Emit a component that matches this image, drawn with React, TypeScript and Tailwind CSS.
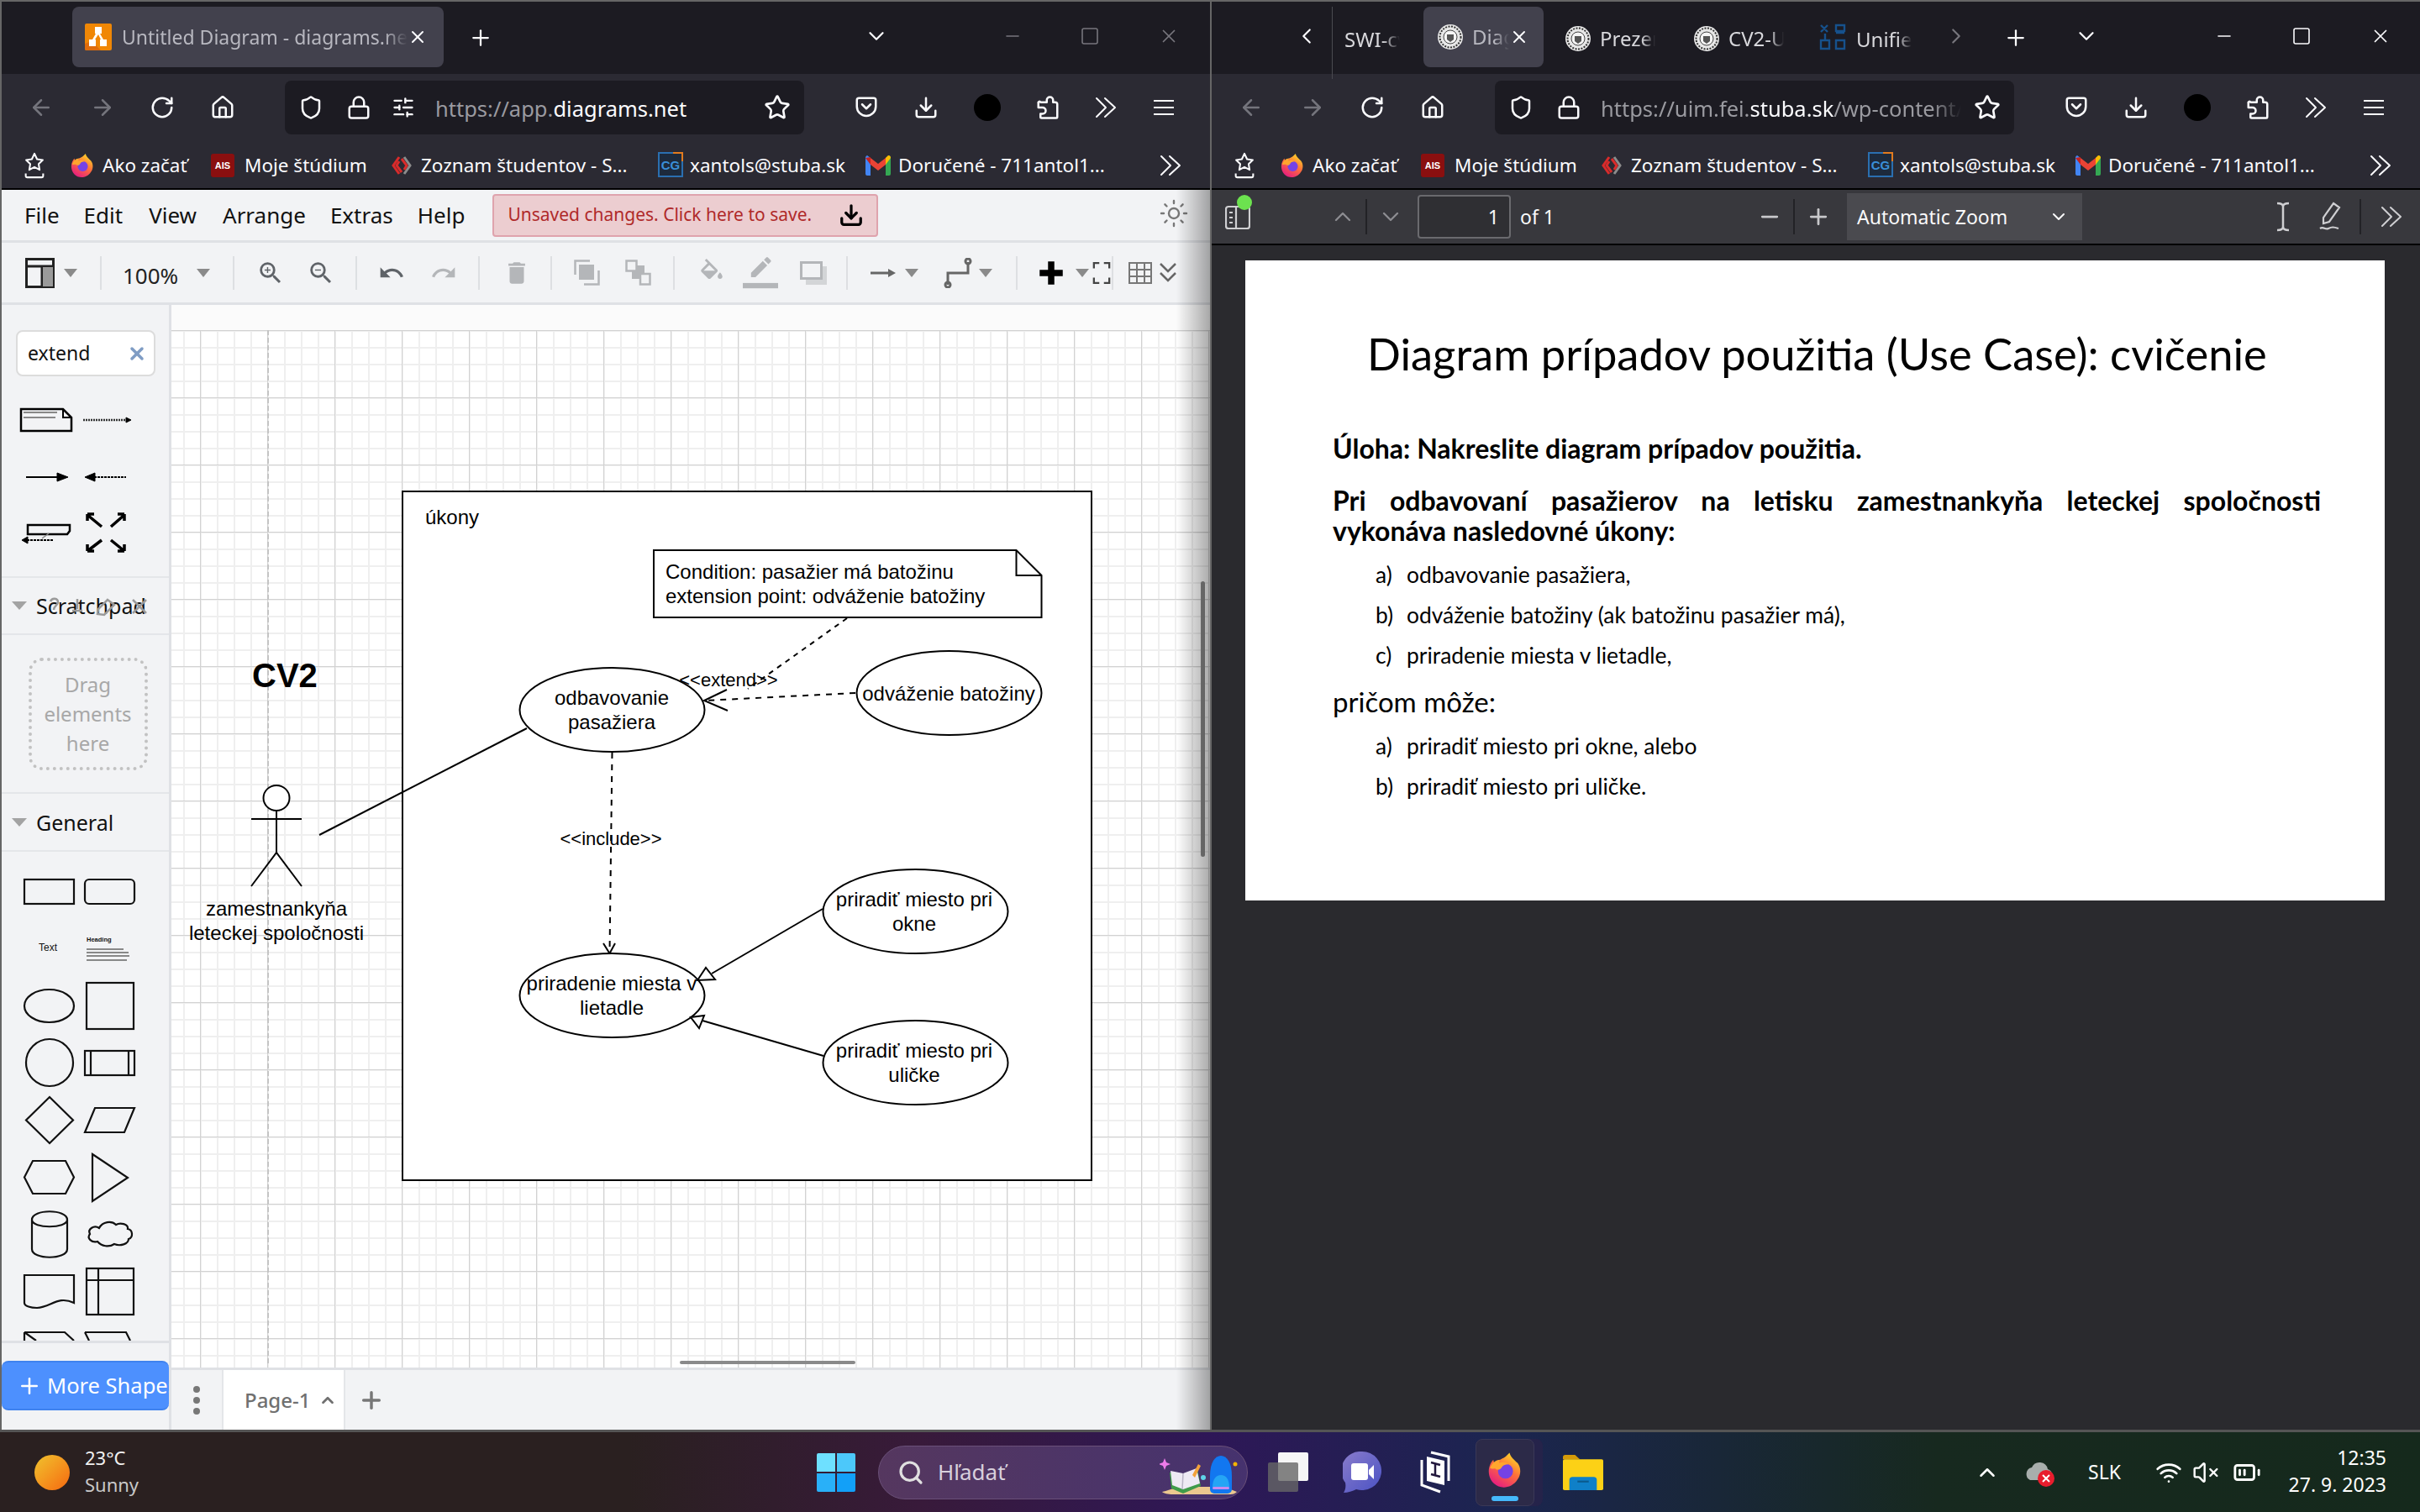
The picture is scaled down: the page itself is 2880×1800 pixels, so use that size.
import React from "react";
import { ArrowLeft, ArrowRight, RotateCw, House, Shield, Lock, SlidersHorizontal, Star, Download, Plus, X, ChevronDown, ChevronUp, ChevronLeft, ChevronRight, Minus, Square, Search, Wifi, VolumeX, BatteryMedium, Sun } from "lucide-react";

const SANS = "font-['Noto_Sans',sans-serif]";

function Firefox({ cls, id }: { cls: string; id: string }) {
  return (
    <svg viewBox="0 0 32 32" className={cls}>
      <defs>
        <linearGradient id={id} x1="0.8" y1="0" x2="0.2" y2="1">
          <stop offset="0" stopColor="#ffe226" />
          <stop offset="0.45" stopColor="#ff7139" />
          <stop offset="1" stopColor="#e31587" />
        </linearGradient>
      </defs>
      <path d="M20 1c1 4 4 6 7 9 3 4 3 10 0 14-3 5-8 7-12 7C8 31 2 25 2 17 2 13 4 9 6 7c0 2 1 3 2 4 2-4 7-5 9-7 1-1 2-2 3-3z" fill={`url(#${id})`} />
      <circle cx="16.5" cy="17" r="6.5" fill="#7542e5" />
      <path d="M3 14c2-4 5-7 9-7-1 1-1 2-1 3 2-1 6-1 8 1-3 0-5 1-6 3-1 2-4 2-5 1-1-1-3 1-5-1z" fill="#ffa62e" />
    </svg>
  );
}

function Crest({ cls }: { cls: string }) {
  return (
    <svg viewBox="0 0 32 32" className={cls}>
      <circle cx="16" cy="16" r="15" fill="#e8e8e8" />
      <circle cx="16" cy="16" r="12.5" fill="none" stroke="#333" strokeWidth="2" strokeDasharray="2 1.5" />
      <circle cx="16" cy="16" r="8" fill="#f5f5f5" stroke="#444" strokeWidth="1" />
      <path d="M12 13h8v6l-4 3-4-3z" fill="#555" />
    </svg>
  );
}

const Dbl = ({ cls }: { cls: string }) => (
  <svg viewBox="0 0 26 26" className={cls} fill="none" stroke="currentColor" strokeWidth="2" strokeLinecap="round" strokeLinejoin="round">
    <path d="M2 2l11 11L2 24M12 2l12 11-12 11" />
  </svg>
);

function Bookmarks() {
  return (
    <div className={`flex h-[56px] shrink-0 items-center border-b-2 border-black text-[22.5px] text-[#fbfbfe] ${SANS}`}>
      <svg viewBox="0 0 28 34" className="ml-[25px] h-[32px] w-[28px] shrink-0" fill="none" stroke="#fbfbfe" strokeWidth="2.2" strokeLinejoin="round">
        <path d="M14 2l3.300 7 7.200 1-5.200 5.200 1.200 7.300L14 19l-6.500 3.500 1.200-7.300L3.500 10l7.200-1z" />
        <path d="M3 27v3a2 2 0 0 0 2 2h18a2 2 0 0 0 2-2v-3" />
      </svg>
      <Firefox id="ffbm" cls="ml-[28px] h-[30px] w-[30px] shrink-0" />
      <span className="ml-[9px] w-[116px] shrink-0 whitespace-nowrap">Ako začať</span>
      <svg viewBox="0 0 28 28" className="ml-[13px] h-[28px] w-[28px] shrink-0">
        <rect width="28" height="28" rx="3" fill="#8a0f0f" />
        <text x="14" y="18" textAnchor="middle" fontSize="11" fontWeight="700" fill="#fff" fontFamily="Liberation Sans">AIS</text>
      </svg>
      <span className="ml-[12px] w-[158px] shrink-0 whitespace-nowrap">Moje štúdium</span>
      <svg viewBox="0 0 26 26" className="ml-[16px] h-[26px] w-[26px] shrink-0" fill="none" strokeWidth="3">
        <path d="M10 3L3 13l7 10" stroke="#d92b2b" />
        <path d="M16 3l7 10-7 10" stroke="#8c8c8c" />
        <path d="M10 8l-3 5 6 8M16 18l3-5-6-8" stroke="#d92b2b" />
      </svg>
      <span className="ml-[10px] w-[272px] shrink-0 whitespace-nowrap">Zoznam študentov - S...</span>
      <svg viewBox="0 0 30 32" className="ml-[10px] h-[32px] w-[30px] shrink-0">
        <rect x="1" y="1" width="28" height="28" fill="#1d2a3c" stroke="#2a6fb0" strokeWidth="2" />
        <text x="15" y="21" textAnchor="middle" fontSize="15" fontWeight="700" fill="#3a8fd8" fontFamily="Liberation Sans">CG</text>
        <path d="M18 1h11v10" fill="none" stroke="#e27b1f" strokeWidth="2" />
      </svg>
      <span className="ml-[8px] w-[200px] shrink-0 whitespace-nowrap">xantols@stuba.sk</span>
      <svg viewBox="0 0 30 24" className="ml-[9px] h-[24px] w-[30px] shrink-0">
        <path d="M0 3a3 3 0 0 1 2-3l4 3v21H2a2 2 0 0 1-2-2z" fill="#4285f4" />
        <path d="M24 24V3l4-3a3 3 0 0 1 2 3v19a2 2 0 0 1-2 2z" fill="#34a853" />
        <path d="M6 3l9 7 9-7v8l-9 7-9-7z" fill="#ea4335" />
        <path d="M0 3l6-1v9z" fill="#c5221f" />
        <path d="M24 3l3-3c2 0 3 1 3 3l-6 8z" fill="#fbbc04" />
      </svg>
      <span className="ml-[9px] w-[270px] shrink-0 whitespace-nowrap">Doručené - 711antol1...</span>
      <Dbl cls="ml-[41px] h-[26px] w-[26px] text-[#fbfbfe]" />
    </div>
  );
}

function NavBar({ right }: { right: boolean }) {
  return (
    <div className="flex h-[82px] shrink-0 items-start pt-[8px]">
      <div className="flex h-[64px] items-center">
        <ArrowLeft className="ml-[32px] h-[30px] w-[30px] text-[#74747c]" strokeWidth={2} />
        <ArrowRight className="ml-[43px] h-[30px] w-[30px] text-[#74747c]" strokeWidth={2} />
        <RotateCw className="ml-[41px] h-[30px] w-[30px] text-[#fbfbfe]" strokeWidth={2} />
        <House className="ml-[42px] h-[30px] w-[30px] text-[#fbfbfe]" strokeWidth={2} />
      </div>
      <div className={`ml-[59px] flex h-[64px] w-[618px] shrink-0 items-center overflow-hidden rounded-lg bg-[#1c1b22] text-[25.5px] ${SANS}`}>
        <Shield className="ml-[16px] h-[30px] w-[30px] shrink-0 text-[#fbfbfe]" strokeWidth={2} />
        <Lock className="ml-[27px] h-[30px] w-[30px] shrink-0 text-[#fbfbfe]" strokeWidth={2} />
        {right ? (
          <span className="ml-[23px] w-[429px] shrink-0 overflow-hidden whitespace-nowrap pt-[2px] text-[#9a9aa0] [mask-image:linear-gradient(to_right,black_92%,transparent)]">
            https://uim.fei.<span className="text-[#fbfbfe]">stuba.sk</span>/wp-content/uploads
          </span>
        ) : (
          <>
            <SlidersHorizontal className="ml-[24px] h-[28px] w-[28px] shrink-0 text-[#fbfbfe]" strokeWidth={2} />
            <span className="ml-[24px] w-[376px] shrink-0 whitespace-nowrap pt-[2px] text-[#9a9aa0]">
              https://app.<span className="text-[#fbfbfe]">diagrams.net</span>
            </span>
          </>
        )}
        <Star className="ml-[15px] h-[32px] w-[32px] shrink-0 text-[#fbfbfe]" strokeWidth={2} />
      </div>
      <div className="flex h-[64px] items-center text-[#fbfbfe]">
        <svg viewBox="0 0 24 24" className="ml-[59px] h-[30px] w-[30px]" fill="none" stroke="currentColor" strokeWidth="2" strokeLinejoin="round" strokeLinecap="round">
          <path d="M3 5a2 2 0 0 1 2-2h14a2 2 0 0 1 2 2v6a9 9 0 0 1-18 0z" />
          <path d="M8 9l4 4 4-4" />
        </svg>
        <Download className="ml-[41px] h-[30px] w-[30px]" strokeWidth={2} />
        <span className="ml-[42px] h-[32px] w-[32px] rounded-full bg-black" />
        <svg viewBox="0 0 24 24" className="ml-[41px] h-[32px] w-[30px]" fill="none" stroke="currentColor" strokeWidth="2" strokeLinejoin="round">
          <path d="M5 7h6V5a3 3 0 0 1 6 0v2h2a2 2 0 0 1 2 2v12a1 1 0 0 1-1 1H6a1 1 0 0 1-1-1v-3h2a3 3 0 0 0 0-6H3V8a1 1 0 0 1 2-1z" />
        </svg>
        <Dbl cls="ml-[41px] h-[26px] w-[26px]" />
        <svg viewBox="0 0 24 20" className="ml-[44px] h-[20px] w-[24px]" stroke="currentColor" strokeWidth="2.2"><path d="M0 2h24M0 10h24M0 18h24" /></svg>
      </div>
    </div>
  );
}

function WinControls({ cls, color }: { cls: string; color: string }) {
  return (
    <div className={`flex items-center ${color} ${cls}`}>
      <Minus className="h-[24px] w-[24px]" strokeWidth={1.6} />
      <Square className="ml-[68px] h-[24px] w-[24px]" strokeWidth={1.6} />
      <X className="ml-[69px] h-[26px] w-[26px]" strokeWidth={1.6} />
    </div>
  );
}

function Ic({ d, cls }: { d: string; cls: string }) {
  return (
    <svg viewBox="0 0 24 24" className={cls} fill="currentColor">
      <path d={d} />
    </svg>
  );
}
const Caret = ({ cls }: { cls: string }) => (
  <svg viewBox="0 0 16 10" className={`h-[10px] w-[16px] ${cls}`}>
    <path d="M0 0h16l-8 10z" fill="#8a8a8a" />
  </svg>
);
const Sep = ({ cls }: { cls: string }) => <i className={`h-[40px] w-[2px] bg-[#dddfe2] ${cls}`} />;

const ZOOM = "M15.5 14h-.79l-.28-.27A6.471 6.471 0 0 0 16 9.5 6.5 6.5 0 1 0 9.5 16c1.61 0 3.09-.59 4.23-1.57l.27.28v.79l5 4.99L20.49 19l-4.99-5zm-6 0C7.01 14 5 11.99 5 9.5S7.01 5 9.5 5 14 7.01 14 9.500 11.99 14 9.500 14z";

function Toolbar() {
  const off = "text-[#b4b6b9]";
  const on = "text-[#5f6368]";
  return (
    <div className="flex h-[74px] shrink-0 items-center border-b-[3px] border-[#dfe1e5] bg-[#f2f3f5]">
      <svg viewBox="0 0 35 36" className="ml-[28px] h-[36px] w-[35px]">
        <rect x="1.5" y="1.5" width="32" height="33" fill="none" stroke="#222" strokeWidth="3" />
        <path d="M1.5 10h32M20 10v25" stroke="#222" strokeWidth="3" />
        <rect x="21" y="11" width="12" height="23" fill="#9a9a9a" />
      </svg>
      <Caret cls="ml-[11px]" />
      <Sep cls="ml-[27px]" />
      <span className={`ml-[25px] mt-[8px] w-[66px] text-[26px] text-[#222] ${SANS}`}>100%</span>
      <Caret cls="ml-[22px]" />
      <Sep cls="ml-[27px]" />
      <svg viewBox="0 0 24 24" className={`ml-[26px] h-[34px] w-[34px] ${on}`} fill="currentColor"><path d={ZOOM} /><path d="M12 10h-2v2H9v-2H7V9h2V7h1v2h2v1z" /></svg>
      <svg viewBox="0 0 24 24" className={`ml-[26px] h-[34px] w-[34px] ${on}`} fill="currentColor"><path d={ZOOM} /><path d="M7 9h5v1H7z" /></svg>
      <Sep cls="ml-[24px]" />
      <Ic cls={`ml-[25px] h-[32px] w-[32px] ${on}`} d="M12.5 8c-2.65 0-5.05.99-6.9 2.6L2 7v9h9l-3.62-3.62c1.39-1.16 3.16-1.88 5.12-1.88 3.54 0 6.55 2.31 7.6 5.5l2.37-.78C21.08 11.03 17.15 8 12.5 8z" />
      <Ic cls={`ml-[30px] h-[32px] w-[32px] ${off}`} d="M18.4 10.6C16.55 8.99 14.15 8 11.5 8c-4.65 0-8.58 3.03-9.96 7.22L3.9 16c1.05-3.19 4.05-5.5 7.6-5.5 1.95 0 3.73.72 5.12 1.88L13 16h9V7l-3.6 3.6z" />
      <Sep cls="ml-[25px]" />
      <Ic cls={`ml-[27px] h-[34px] w-[34px] ${off}`} d="M6 19c0 1.1.9 2 2 2h8c1.1 0 2-.9 2-2V7H6v12zM19 4h-3.5l-1-1h-5l-1 1H5v2h14V4z" />
      <Sep cls="ml-[23px]" />
      <svg viewBox="0 0 31 31" className="ml-[26px] h-[31px] w-[31px]" fill="none" stroke="#b4b6b9" strokeWidth="2.5">
        <path d="M1.5 18V1.500H19M29.500 13v16.500H12" />
        <rect x="6" y="6" width="18" height="18" fill="#b4b6b9" stroke="none" />
      </svg>
      <svg viewBox="0 0 31 31" className="ml-[30px] h-[31px] w-[31px]" stroke="#b4b6b9" strokeWidth="2.5">
        <rect x="8" y="7" width="15" height="16" fill="#b4b6b9" stroke="none" />
        <rect x="1.500" y="1.500" width="12" height="12" fill="#f2f3f5" />
        <rect x="18" y="17" width="11.500" height="12.500" fill="#f2f3f5" />
      </svg>
      <Sep cls="ml-[26px]" />
      <Ic cls={`ml-[27px] h-[34px] w-[34px] ${off}`} d="M16.56 8.94L7.62 0 6.21 1.41l2.38 2.38-5.15 5.15c-.59.59-.59 1.54 0 2.12l5.5 5.5c.29.29.68.44 1.06.44s.77-.15 1.06-.44l5.5-5.500c.59-.58.59-1.53 0-2.12zM5.21 10L10 5.21 14.79 10H5.21zM19 11.500s-2 2.170-2 3.500c0 1.100.9 2 2 2s2-.9 2-2c0-1.330-2-3.500-2-3.500z" />
      <svg viewBox="-3 0 30 27" className={`ml-[20px] h-[38px] w-[42px] ${off}`} fill="currentColor">
        <path d="M17.750 7L14 3.250l-10 10V17h3.750l10-10zm2.960-2.960c.39-.39.39-1.020 0-1.410L18.370.29a.9959.9959 0 0 0-1.410 0L15 2.250 18.750 6l1.960-1.960z" />
        <rect x="-3" y="22" width="30" height="4.500" />
      </svg>
      <svg viewBox="0 0 32 28" className="ml-[26px] h-[28px] w-[32px]" fill="none">
        <rect x="7" y="6" width="25" height="22" fill="#d3d5d7" />
        <rect x="1.500" y="1.500" width="24" height="19" fill="#f2f3f5" stroke="#b4b6b9" strokeWidth="3" />
      </svg>
      <Sep cls="ml-[23px]" />
      <svg viewBox="0 0 32 24" className="ml-[26px] h-[24px] w-[32px]"><path d="M1 12h24" stroke="#666" strokeWidth="3" /><path d="M22 7l9 5-9 5z" fill="#666" /></svg>
      <Caret cls="ml-[10px]" />
      <svg viewBox="0 0 34 36" className="ml-[30px] h-[36px] w-[34px]" fill="none" stroke="#666" strokeWidth="3"><path d="M5 32V18h24V5" /><circle cx="5" cy="32" r="3" /><circle cx="29" cy="4" r="3" /></svg>
      <Caret cls="ml-[8px]" />
      <Sep cls="ml-[28px]" />
      <Ic cls="ml-[25px] h-[30px] w-[30px] text-black" d="M9 1h6v8h8v6h-8v8H9v-8H1V9h8z" />
      <Caret cls="ml-[14px]" />
      <svg viewBox="0 0 24 30" className="ml-[4px] h-[30px] w-[22px]" fill="none" stroke="#444" strokeWidth="2.5"><path d="M2 9V2h7M15 2h7v7M22 21v7h-7M9 28H2v-7" /></svg>
      <Sep cls="ml-[1px]" />
      <svg viewBox="0 0 30 30" className="ml-[17px] h-[30px] w-[30px]" fill="none" stroke="#777" strokeWidth="2"><rect x="2" y="3" width="26" height="24" /><path d="M2 11h26M2 19h26M11 3v24M20 3v24" /></svg>
      <svg viewBox="0 0 24 30" className="ml-[6px] h-[30px] w-[24px]" fill="none" stroke="#666" strokeWidth="2.5"><path d="M3 4l9 9 9-9M3 15l9 9 9-9" /></svg>
    </div>
  );
}

function SearchShapes() {
  return (
    <svg viewBox="2 448 198 238" className="h-[238px] w-[198px] shrink-0" stroke="#000" fill="none">
      <path d="M25 487h50l10 10v16H25z" strokeWidth="2.5" />
      <path d="M75 487v10h10" strokeWidth="2" />
      <path d="M28 491h40M28 497h38" stroke="#888" strokeWidth="2" />
      <path d="M99 500h52" stroke="#333" strokeWidth="2.5" strokeDasharray="2 1" />
      <path d="M150 497l6 3-6 3z" fill="#000" />
      <path d="M31 568h38" strokeWidth="2" />
      <path d="M68 563l13 5-13 5z" fill="#000" />
      <path d="M112 568h38" strokeWidth="2" strokeDasharray="3 1" />
      <path d="M113 563l-12 5 12 5z" fill="#000" />
      <path d="M33 625h50v7l-3 4H33z" strokeWidth="2.5" />
      <path d="M28 643h36" strokeWidth="2" strokeDasharray="3 1" />
      <path d="M33 639l-7 4 7 4z" fill="#000" />
      <path d="M50 641l8-6" stroke="#888" strokeWidth="1.5" />
      <g strokeWidth="3.5">
        <path d="M104 613l17 14M104 612h8M104 612v8" />
        <path d="M148 613l-16 14M148 612h-8M148 612v8" />
        <path d="M104 656l17-13M104 656h8M104 656v-8" />
        <path d="M148 656l-16-13M148 656h-8M148 656v-8" />
      </g>
    </svg>
  );
}

function GeneralShapes() {
  return (
    <svg viewBox="2 1014 198 582" className="h-[582px] w-[198px] shrink-0" stroke="#111" strokeWidth="2.2" fill="none">
      <rect x="29" y="1047" width="59" height="29" />
      <rect x="101" y="1047" width="59" height="29" rx="5" />
      <text x="57" y="1132" textAnchor="middle" fontSize="12" stroke="none" fill="#111" fontFamily="Liberation Sans">Text</text>
      <text x="103" y="1121" fontSize="7.5" fontWeight="700" stroke="none" fill="#111" fontFamily="Liberation Sans">Heading</text>
      <path d="M103 1130h44M103 1134h50M103 1138h51M103 1143h48" stroke="#888" strokeWidth="2" />
      <ellipse cx="58.5" cy="1197.5" rx="29.5" ry="19.5" />
      <rect x="103" y="1170" width="56" height="55" />
      <circle cx="59" cy="1265" r="28" />
      <rect x="101" y="1251" width="59" height="29" />
      <path d="M108 1251v29M153 1251v29" />
      <path d="M59 1306l28 27.500-28 27.500-28-27.500z" />
      <path d="M113 1319h47l-12 29h-47z" />
      <path d="M39 1382h39l10 19.500-10 19.500H39l-10-19.500z" />
      <path d="M110 1374l42 28-42 28z" />
      <path d="M38 1452c0-13 42-13 42 0v35c0 13-42 13-42 0zM38 1452c0 11 42 11 42 0" />
      <path d="M118 1462c-6-4-14 1-11 7-4 5 2 11 9 9 5 6 14 7 20 3 7 3 17 0 17-6 6-2 5-11-1-12 1-6-9-8-14-5-5-5-16-4-20 4z" />
      <path d="M29 1518h59v33c-19-9-27 5-44 6-7 0-15-2-15-6z" />
      <rect x="103" y="1510" width="56" height="55" />
      <path d="M103 1524h56M117 1510v55" />
      <path d="M29 1586h48l11 10M29 1586v10M29 1586l14 10" />
      <path d="M101 1586h49l5 10M101 1586l5 10" />
    </svg>
  );
}

function Sidebar() {
  return (
    <aside className={`flex h-full w-[202px] shrink-0 flex-col border-r-[3px] border-[#dfe1e5] bg-[#f2f3f5] ${SANS}`}>
      <div className="ml-[17px] mt-[30px] flex h-[55px] w-[166px] shrink-0 items-center rounded-lg border-2 border-[#dcdcdc] bg-white">
        <span className="ml-[12px] w-[118px] text-[23px] text-[#111]">extend</span>
        <X className="h-[24px] w-[24px] text-[#7f9cc4]" strokeWidth={3.5} />
      </div>
      <SearchShapes />
      <div className="relative flex h-[70px] shrink-0 items-center border-y-2 border-[#e4e6e9]">
        <svg viewBox="0 0 18 10" className="ml-[12px] h-[10px] w-[18px]"><path d="M0 0h18l-9 10z" fill="#a3a3a3" /></svg>
        <span className="ml-[11px] pt-[2px] text-[25px] text-[#111]">Scratchpad</span>
        <svg viewBox="0 0 120 24" className="absolute left-[52px] top-[22px] h-[24px] w-[124px]" fill="none" stroke="#9a9a9a" strokeWidth="2.5">
          <path d="M4 6c2-5 9-4 9 1 0 4-5 4-5 9" />
          <path d="M36 3v12M30 17h12" />
          <path d="M72 4l8 6-12 12-8-1 1-6z" />
          <path d="M102 4l16 16M118 4l-16 16" />
        </svg>
      </div>
      <div className="flex h-[187px] shrink-0 items-center justify-center">
        <div className="ml-[6px] flex h-[134px] w-[142px] flex-col items-center justify-center rounded-[16px] border-[4px] border-dotted border-[#c2c2c2] text-[24px] leading-[35px] text-[#a8a8a8]">
          <span>Drag</span>
          <span>elements</span>
          <span>here</span>
        </div>
      </div>
      <div className="flex h-[71px] shrink-0 items-center border-y-2 border-[#e4e6e9]">
        <svg viewBox="0 0 18 10" className="ml-[12px] h-[10px] w-[18px]"><path d="M0 0h18l-9 10z" fill="#a3a3a3" /></svg>
        <span className="ml-[11px] pt-[2px] text-[25px] text-[#111]">General</span>
      </div>
      <div className="h-[582px] shrink-0 overflow-hidden">
        <GeneralShapes />
      </div>
      <div className="flex-1 border-t-[3px] border-[#dfe1e5] pt-[21px]">
        <button className="flex h-[59px] w-[199px] items-center overflow-hidden rounded-lg border-y-2 border-[#3f82ee] bg-[#4d90fe] text-white">
          <Plus className="ml-[18px] h-[30px] w-[30px] shrink-0" strokeWidth={2} />
          <span className="ml-[6px] whitespace-nowrap text-[25.5px]">More Shapes</span>
        </button>
      </div>
    </aside>
  );
}

function Diagram() {
  const F = { fontFamily: "Liberation Sans, sans-serif", fontSize: 24, fill: "#000", stroke: "none" } as const;
  return (
    <svg viewBox="204 363 1234 1265" className="absolute left-0 top-0 h-[1265px] w-[1234px]" stroke="#000" strokeWidth="2" fill="none">
      <rect x="479" y="585" width="820" height="820" fill="#fff" />
      <text {...F} x="506" y="624">úkony</text>
      <path d="M778 655h431.500l30 30v50H778z" fill="#fff" />
      <path d="M1209.500 655v30h30" />
      <text {...F} x="792" y="689">Condition: pasažier má batožinu</text>
      <text {...F} x="792" y="718">extension point: odváženie batožiny</text>
      <path d="M1008 736L890 820" strokeDasharray="6 6" />
      <path d="M1018 825L839 834" strokeDasharray="7 7" />
      <path d="M865 821L838 834L866 846" />
      <ellipse cx="728.500" cy="845" rx="110" ry="50" fill="#fff" />
      <text {...F} x="728" y="839" textAnchor="middle">odbavovanie</text>
      <text {...F} x="728" y="868" textAnchor="middle">pasažiera</text>
      <ellipse cx="1129.500" cy="825" rx="110" ry="50" fill="#fff" />
      <text {...F} x="1129" y="834" textAnchor="middle">odváženie batožiny</text>
      <text {...F} x="867" y="817" textAnchor="middle" fontSize="22">&lt;&lt;extend&gt;&gt;</text>
      <path d="M728.500 896L725.500 1135" strokeDasharray="7 7" />
      <path d="M718 1123L725.500 1135L732 1123" />
      <text {...F} x="727" y="1006" textAnchor="middle" fontSize="22">&lt;&lt;include&gt;&gt;</text>
      <path d="M380 994L627 867" />
      <ellipse cx="728.500" cy="1185" rx="110" ry="50" fill="#fff" />
      <text {...F} x="728" y="1179" textAnchor="middle">priradenie miesta v</text>
      <text {...F} x="728" y="1208" textAnchor="middle">lietadle</text>
      <path d="M979 1082L847 1159" />
      <path d="M830 1167L840 1152L851 1166z" fill="#fff" />
      <path d="M980 1257L836 1215" />
      <path d="M822 1211L838 1209L832 1224z" fill="#fff" />
      <ellipse cx="1089.500" cy="1085" rx="110" ry="50" fill="#fff" />
      <text {...F} x="1088" y="1079" textAnchor="middle">priradiť miesto pri</text>
      <text {...F} x="1088" y="1108" textAnchor="middle">okne</text>
      <ellipse cx="1089.500" cy="1265" rx="110" ry="50" fill="#fff" />
      <text {...F} x="1088" y="1259" textAnchor="middle">priradiť miesto pri</text>
      <text {...F} x="1088" y="1288" textAnchor="middle">uličke</text>
      <path d="M319 393V1625" stroke="#c4c4c4" strokeDasharray="6 3" />
      <text {...F} x="300" y="818" fontSize="40" fontWeight="700">CV2</text>
      <ellipse cx="329" cy="950" rx="15.500" ry="15" fill="#fff" />
      <path d="M329 965v50M299 975h60M299 1055l30-40 30 40" />
      <text {...F} x="329" y="1090" textAnchor="middle">zamestnankyňa</text>
      <text {...F} x="329" y="1119" textAnchor="middle">leteckej spoločnosti</text>
    </svg>
  );
}

function DiagramsApp() {
  return (
    <div className="relative flex min-h-0 flex-1 flex-col bg-[#f2f3f5]">
      <div className={`flex h-[63px] shrink-0 items-center border-b-[3px] border-[#dfe1e5] text-[26px] text-[#111] ${SANS}`}>
        <span className="ml-[27px]">File</span>
        <span className="ml-[29px]">Edit</span>
        <span className="ml-[31px]">View</span>
        <span className="ml-[31px]">Arrange</span>
        <span className="ml-[29px]">Extras</span>
        <span className="ml-[29px]">Help</span>
        <div className="ml-[33px] flex h-[51px] w-[459px] items-center rounded border-2 border-[#dfa3ad] bg-[#eccdd0] pl-[16px] text-[21px] text-[#b02a2a]">
          <span className="w-[394px] whitespace-nowrap">Unsaved changes. Click here to save.</span>
          <Download className="h-[30px] w-[30px] text-black" strokeWidth={2.6} />
        </div>
        <Sun className="mb-[4px] ml-[334px] h-[36px] w-[36px] text-[#777]" strokeWidth={1.6} />
      </div>
      <Toolbar />
      <div className="flex min-h-0 flex-1">
        <Sidebar />
        <div className="flex min-w-0 flex-1 flex-col">
          <div className="relative min-h-0 flex-1 overflow-hidden bg-[#fbfbfb] pt-[30px]">
            <div className="h-full bg-white bg-[linear-gradient(to_right,#d2d2d2_1px,transparent_1px),linear-gradient(to_bottom,#d2d2d2_1px,transparent_1px),linear-gradient(to_right,#efefef_2px,transparent_2px),linear-gradient(to_bottom,#efefef_2px,transparent_2px)] bg-[size:80px_80px,80px_80px,20px_20px,20px_20px] bg-[position:34px_0,0_0,14px_0,0_0]" />
            <Diagram />
            <div className="absolute left-[1225px] top-[329px] h-[328px] w-[5px] rounded bg-[#8a8a8a]" />
            <div className="absolute left-[605px] top-[1257px] h-[4px] w-[209px] rounded bg-[#8a8a8a]" />
          </div>
          <div className={`flex h-[74px] shrink-0 border-t-[3px] border-[#dfe1e5] bg-[#f2f3f5] text-[24px] ${SANS}`}>
            <div className="flex w-[60px] flex-col items-center justify-center gap-[5px]">
              <i className="h-[8px] w-[8px] rounded-full bg-[#777]" />
              <i className="h-[8px] w-[8px] rounded-full bg-[#777]" />
              <i className="h-[8px] w-[8px] rounded-full bg-[#777]" />
            </div>
            <div className="flex w-[147px] items-center border-x-2 border-[#e4e6e9] bg-white pl-[25px] font-medium text-[#707070]">
              <span>Page-1</span>
              <ChevronUp className="ml-[10px] h-[22px] w-[22px]" strokeWidth={3} />
            </div>
            <Plus className="ml-[15px] mt-[20px] h-[32px] w-[32px] text-[#777]" strokeWidth={2.6} />
          </div>
        </div>
      </div>
      <div className="pointer-events-none absolute inset-y-0 right-0 w-[40px] bg-gradient-to-r from-transparent to-[#00000055]" />
    </div>
  );
}

function PdfViewer() {
  return (
    <div className={`flex min-h-0 flex-1 flex-col bg-[#2a2a2e] ${SANS}`}>
      <div className="flex h-[66px] shrink-0 items-center border-b-2 border-black bg-[#38383d] text-[#f9f9fa]">
        <div className="relative ml-[16px] h-[32px] w-[30px]">
          <svg viewBox="0 0 30 32" className="h-[32px] w-[30px]" fill="none" stroke="#cfcfd2" strokeWidth="2.2"><rect x="1" y="4" width="28" height="26" rx="3" /><path d="M13 4v26M5 11h4M5 17h4M5 23h4" /></svg>
          <i className="absolute left-[14px] top-[-10px] h-[18px] w-[18px] rounded-full bg-[#6ce24f]" />
        </div>
        <ChevronUp className="ml-[94px] h-[32px] w-[32px] text-[#8d8d92]" strokeWidth={1.7} />
        <i className="ml-[11px] h-[42px] w-[2px] bg-[#222226]" />
        <ChevronDown className="ml-[12px] h-[32px] w-[32px] text-[#8d8d92]" strokeWidth={1.7} />
        <div className="ml-[16px] flex h-[52px] w-[111px] items-center justify-end rounded border-2 border-[#6a6a6e] bg-[#2f2f33] pr-[12px] text-[23px]">1</div>
        <span className="ml-[11px] text-[23px]">of 1</span>
        <Minus className="ml-[241px] h-[30px] w-[30px] text-[#c8c8cb]" strokeWidth={2.2} />
        <i className="ml-[13px] h-[42px] w-[2px] bg-[#222226]" />
        <Plus className="ml-[13px] h-[30px] w-[30px] text-[#c8c8cb]" strokeWidth={2.2} />
        <div className="ml-[19px] flex h-[56px] w-[280px] items-center bg-[#4a4a4f] pl-[12px] text-[23px]">
          <span className="w-[228px] whitespace-nowrap">Automatic Zoom</span>
          <ChevronDown className="h-[24px] w-[24px]" strokeWidth={2} />
        </div>
        <svg viewBox="0 0 24 36" className="ml-[227px] h-[36px] w-[24px]" fill="none" stroke="#cfcfd2" strokeWidth="2.5"><path d="M5 2c4 0 7 1 7 4v24c0 3-3 4-7 4M19 2c-4 0-7 1-7 4M19 34c-4 0-7-1-7-4" /></svg>
        <svg viewBox="0 0 30 36" className="ml-[29px] h-[36px] w-[30px]" fill="none" stroke="#cfcfd2" strokeWidth="2.2"><path d="M19 2l7 5-12 17-7 2 0-7zM3 32c4-3 6 2 10 0s6-2 12 0" /></svg>
        <i className="ml-[20px] h-[42px] w-[2px] bg-[#222226]" />
        <Dbl cls="ml-[23px] h-[26px] w-[26px] text-[#cfcfd2]" />
      </div>
      <div className="ml-[40px] mt-[18px] h-[762px] w-[1356px] bg-white pl-[104px] pr-[76px] font-['Lato',sans-serif] text-black">
        <h1 className="ml-[41px] mt-[76px] whitespace-nowrap text-[52.5px] leading-[70px] font-normal">Diagram prípadov použitia (Use Case): cvičenie</h1>
        <p className="mt-[58px] whitespace-nowrap text-[32px] leading-[40px] font-bold">Úloha: Nakreslite diagram prípadov použitia.</p>
        <p className="mt-[24px] text-[32px] leading-[36px] font-bold [text-align-last:justify]">Pri odbavovaní pasažierov na letisku zamestnankyňa leteckej spoločnosti</p>
        <p className="text-[32px] leading-[36px] font-bold">vykonáva nasledovné úkony:</p>
        <ol className="mt-[10px] text-[26.4px] leading-[48px]">
          <li className="flex pl-[51px]"><span className="w-[37px]">a)</span>odbavovanie pasažiera,</li>
          <li className="flex pl-[51px]"><span className="w-[37px]">b)</span>odváženie batožiny (ak batožinu pasažier má),</li>
          <li className="flex pl-[51px]"><span className="w-[37px]">c)</span>priradenie miesta v lietadle,</li>
        </ol>
        <p className="mt-[9px] text-[33px] leading-[44px]">pričom môže:</p>
        <ol className="mt-[7px] text-[26.4px] leading-[48px]">
          <li className="flex pl-[51px]"><span className="w-[37px]">a)</span>priradiť miesto pri okne, alebo</li>
          <li className="flex pl-[51px]"><span className="w-[37px]">b)</span>priradiť miesto pri uličke.</li>
        </ol>
      </div>
    </div>
  );
}

function LeftWindow() {
  return (
    <section className="flex h-full w-[1440px] flex-col border-l-2 border-t-2 border-[#666] bg-[#2b2a33]">
      <div className={`flex h-[86px] shrink-0 items-start bg-[#1c1b22] pt-[6px] text-[#fbfbfe] ${SANS}`}>
        <div className="ml-[84px] flex h-[72px] w-[442px] items-center rounded-lg bg-[#42414d]">
          <svg viewBox="0 0 32 32" className="ml-[15px] h-[32px] w-[32px] shrink-0">
            <rect width="32" height="32" rx="2" fill="#f08705" />
            <path d="M0 24l8-3 11 11H2a2 2 0 0 1-2-2z" fill="#df6c0c" />
            <path d="M12 4h8v8h-2l4 7h4v8h-8v-8h1l-3-6-4 6h1v8H5v-8h4l4-7h-1z" fill="#fff" />
          </svg>
          <span className="ml-[12px] w-[340px] shrink-0 overflow-hidden whitespace-nowrap text-[23px] text-[#b8b8c0] [mask-image:linear-gradient(to_right,black_92%,transparent)]">Untitled Diagram - diagrams.net</span>
          <X className="ml-[0px] h-[24px] w-[24px] shrink-0 text-[#fbfbfe]" strokeWidth={2} />
        </div>
        <Plus className="ml-[29px] mt-[22px] h-[30px] w-[30px] text-[#fbfbfe]" strokeWidth={1.8} />
        <ChevronDown className="ml-[441px] mt-[20px] h-[30px] w-[30px] text-[#fbfbfe]" strokeWidth={1.8} />
        <WinControls cls="ml-[135px] mt-[22px]" color="text-[#77767d]" />
      </div>
      <NavBar right={false} />
      <Bookmarks />
      <DiagramsApp />
    </section>
  );
}

function RightTab({ label, cls, w }: { label: string; cls: string; w: string }) {
  return (
    <div className={`flex items-center ${cls}`}>
      <Crest cls="h-[32px] w-[32px] shrink-0" />
      <span className={`ml-[10px] overflow-hidden whitespace-nowrap text-[24px] text-[#d8d8dc] [mask-image:linear-gradient(to_right,black_75%,transparent)] ${w}`}>{label}</span>
    </div>
  );
}

function RightWindow() {
  return (
    <section className="flex h-full w-[1440px] flex-col border-l-2 border-t-2 border-[#666] bg-[#2b2a33]">
      <div className={`flex h-[86px] shrink-0 items-start bg-[#1c1b22] pt-[6px] text-[#fbfbfe] ${SANS}`}>
        <ChevronLeft className="ml-[98px] mt-[20px] h-[30px] w-[30px]" strokeWidth={1.7} />
        <i className="ml-[15px] h-[86px] w-[1px] bg-[#4a4a50]" />
        <span className="ml-[14px] mt-[21px] w-[66px] overflow-hidden whitespace-nowrap text-[24px] text-[#d8d8dc] [mask-image:linear-gradient(to_right,black_70%,transparent)]">SWI-cv2</span>
        <div className="ml-[28px] flex h-[72px] w-[143px] items-center rounded-lg bg-[#42414d]">
          <Crest cls="ml-[16px] h-[32px] w-[32px] shrink-0" />
          <span className="ml-[10px] w-[44px] overflow-hidden whitespace-nowrap text-[24px] text-[#b8b8c0] [mask-image:linear-gradient(to_right,black_60%,transparent)]">Diagram</span>
          <X className="h-[24px] w-[24px] shrink-0" strokeWidth={2} />
        </div>
        <RightTab label="Prezentácia" cls="ml-[25px] mt-[20px]" w="w-[66px]" />
        <RightTab label="CV2-UML" cls="ml-[45px] mt-[20px]" w="w-[66px]" />
        <svg viewBox="0 0 32 34" className="ml-[42px] mt-[19px] h-[34px] w-[32px] shrink-0" fill="none" stroke="#16518c" strokeWidth="2.4">
          <path d="M2 3l8 8M10 3l-8 8M2 21h10v10H2zM20 21h10v10H20zM20 3h10v7H20zM20 12h10M7 13v8" />
        </svg>
        <span className="ml-[12px] mt-[21px] w-[66px] overflow-hidden whitespace-nowrap text-[24px] text-[#d8d8dc] [mask-image:linear-gradient(to_right,black_75%,transparent)]">Unified Modeling</span>
        <ChevronRight className="ml-[38px] mt-[20px] h-[30px] w-[30px] text-[#77767d]" strokeWidth={1.7} />
        <Plus className="ml-[41px] mt-[22px] h-[30px] w-[30px]" strokeWidth={1.8} />
        <ChevronDown className="ml-[54px] mt-[20px] h-[30px] w-[30px]" strokeWidth={1.8} />
        <WinControls cls="ml-[137px] mt-[22px]" color="text-[#fbfbfe]" />
      </div>
      <NavBar right={true} />
      <Bookmarks />
      <PdfViewer />
    </section>
  );
}

function Taskbar() {
  return (
    <footer className={`flex h-[98px] shrink-0 items-center border-t-[3px] border-[#555] bg-[linear-gradient(90deg,#2a2020_0%,#2a2020_26%,#381a3a_38%,#2e1757_50%,#1b2550_62%,#17291f_80%,#15291c_100%)] text-white ${SANS}`}>
      <i className="ml-[41px] h-[42px] w-[42px] shrink-0 rounded-full bg-gradient-to-br from-[#eec22d] to-[#f4660f]" />
      <div className="mb-[3px] ml-[18px] flex w-[871px] shrink-0 flex-col text-[22px] leading-[32px]">
        <span className="text-[#f0f0f0]">23°C</span>
        <span className="text-[#c8c8c8]">Sunny</span>
      </div>
      <svg viewBox="0 0 46 46" className="h-[46px] w-[46px] shrink-0">
        <path d="M0 2a2 2 0 0 1 2-2h20v22H0z" fill="#6ee0ff" />
        <path d="M24 0h20a2 2 0 0 1 2 2v20H24z" fill="#4cc8fa" />
        <path d="M0 24h22v22H2a2 2 0 0 1-2-2z" fill="#29b0f8" />
        <path d="M24 24h22v20a2 2 0 0 1-2 2H24z" fill="#12a0f8" />
      </svg>
      <div className="ml-[27px] flex h-[64px] w-[440px] shrink-0 items-center rounded-[32px] border border-[#6a5078] bg-gradient-to-r from-[#55375f] to-[#46326e]">
        <Search className="ml-[22px] h-[32px] w-[32px] text-[#e0e0e0]" strokeWidth={2.4} />
        <span className="ml-[16px] w-[264px] text-[26px] text-[#d8d0dc]">Hľadať</span>
        <svg viewBox="1380 1722 100 60" className="h-[60px] w-[100px] shrink-0">
          <path d="M1383 1775c12-3 18-6 24-6h50l15 6c-3 3-6 3-10 3h-66c-6 0-11-1-13-3z" fill="#ebc88f" />
          <path d="M1392 1752l16 3 17-7 4 20-21 9-14-6z" fill="#3f9b4a" />
          <path d="M1393 1750l15 3 16-6 4 18-20 7-13-5z" fill="#eeeaf4" />
          <path d="M1408 1753l-1 19" stroke="#b9b4c6" strokeWidth="1.500" />
          <path d="M1419 1755l7-13 3 2-7 14z" fill="#f2a23a" />
          <path d="M1386 1735l2 5 5 2-5 2-2 5-2-5-5-2 5-2z" fill="#ee7bea" />
          <circle cx="1432" cy="1758" r="3" fill="#5fd3e8" />
          <path d="M1440 1756c0-16 6-24 13-24s13 8 13 24v16a5 5 0 0 1-5 5h-16a5 5 0 0 1-5-5z" fill="#1277f0" />
          <path d="M1443 1770c0-10 4-15 10-15s10 5 10 15z" fill="#25a5f5" />
          <rect x="1443" y="1769" width="20" height="3" rx="1.500" fill="#c98af0" />
          <circle cx="1470" cy="1742" r="2.500" fill="#f4b400" />
        </svg>
      </div>
      <svg viewBox="0 0 48 48" className="ml-[24px] h-[48px] w-[48px] shrink-0">
        <rect x="12" y="0" width="36" height="34" rx="2" fill="#f6f6f6" />
        <rect x="0" y="12" width="36" height="35" rx="2" fill="#666" fillOpacity="0.8" />
      </svg>
      <svg viewBox="0 0 46 50" className="ml-[41px] h-[50px] w-[46px] shrink-0">
        <defs>
          <linearGradient id="meet" x1="0" y1="0" x2="1" y2="1">
            <stop offset="0" stopColor="#8a7ccb" />
            <stop offset="1" stopColor="#4a52c4" />
          </linearGradient>
        </defs>
        <path d="M23 0a23 23 0 1 1-7 44.900C12 47 6 49 1 49c2-3 3-7 2-12A23 23 0 0 1 23 0z" fill="url(#meet)" />
        <rect x="10" y="14" width="20" height="20" rx="3" fill="#fff" />
        <path d="M31 22l6-6v17l-6-6z" fill="#fff" />
      </svg>
      <svg viewBox="0 0 36 51" className="ml-[46px] h-[51px] w-[36px] shrink-0" fill="none" stroke="#fff" strokeWidth="3">
        <path d="M13 2l21 5v29" />
        <path d="M2 11v30l22 8" />
        <path d="M8 7l21 5v29L8 36z" fill="#fff" stroke="none" />
        <path d="M13 14l11 3M18 16v14M13 28l11 3" stroke="#22173c" strokeWidth="2.500" />
      </svg>
      <div className="ml-[30px] flex h-[80px] w-[80px] shrink-0 rounded-lg bg-[#25234a]">
        <div className="flex h-[80px] w-[70px] flex-col items-center rounded-lg border border-[#3a3856] bg-[#2c2a48] pt-[14px]">
          <Firefox id="fftb" cls="h-[44px] w-[44px]" />
          <i className="mt-[9px] h-[6px] w-[32px] rounded bg-[#45b9fb]" />
        </div>
      </div>
      <svg viewBox="0 0 50 48" preserveAspectRatio="none" className="ml-[24px] h-[42px] w-[48px] shrink-0">
        <path d="M0 3a3 3 0 0 1 3-3h12l6 6H0z" fill="#d49a08" />
        <rect y="6" width="50" height="42" rx="2" fill="#fcd116" />
        <path d="M8 34a4 4 0 0 1 4-4h26a4 4 0 0 1 4 4v14H8z" fill="#0f80c8" />
        <rect x="18" y="35" width="14" height="2.500" fill="#0b5a8e" />
      </svg>
      <ChevronUp className="ml-[442px] h-[30px] w-[30px] shrink-0" strokeWidth={2} />
      <svg viewBox="0 0 36 34" className="ml-[30px] h-[34px] w-[36px] shrink-0">
        <path d="M6 26a8 8 0 0 1 2-15 10 10 0 0 1 19 2 7 7 0 0 1 1 13z" fill="#a8aeac" />
        <circle cx="25" cy="24" r="10" fill="#e81d2d" />
        <path d="M21 20l8 8M29 20l-8 8" stroke="#fff" strokeWidth="2" />
      </svg>
      <span className="ml-[39px] text-[23px]">SLK</span>
      <Wifi className="ml-[41px] h-[32px] w-[32px] shrink-0" strokeWidth={2} />
      <VolumeX className="ml-[12px] h-[32px] w-[32px] shrink-0" strokeWidth={1.8} />
      <BatteryMedium className="ml-[16px] h-[34px] w-[34px] shrink-0" strokeWidth={2} />
      <div className="mb-[3px] ml-auto mr-[40px] flex flex-col items-end text-[23px] leading-[32px]">
        <span>12:35</span>
        <span>27. 9. 2023</span>
      </div>
    </footer>
  );
}

export default function App() {
  return (
    <div className="flex h-[1800px] w-[2880px] flex-col overflow-hidden bg-[#2a2a2e]">
      <div className="flex h-[1702px] shrink-0">
        <LeftWindow />
        <RightWindow />
      </div>
      <Taskbar />
    </div>
  );
}
